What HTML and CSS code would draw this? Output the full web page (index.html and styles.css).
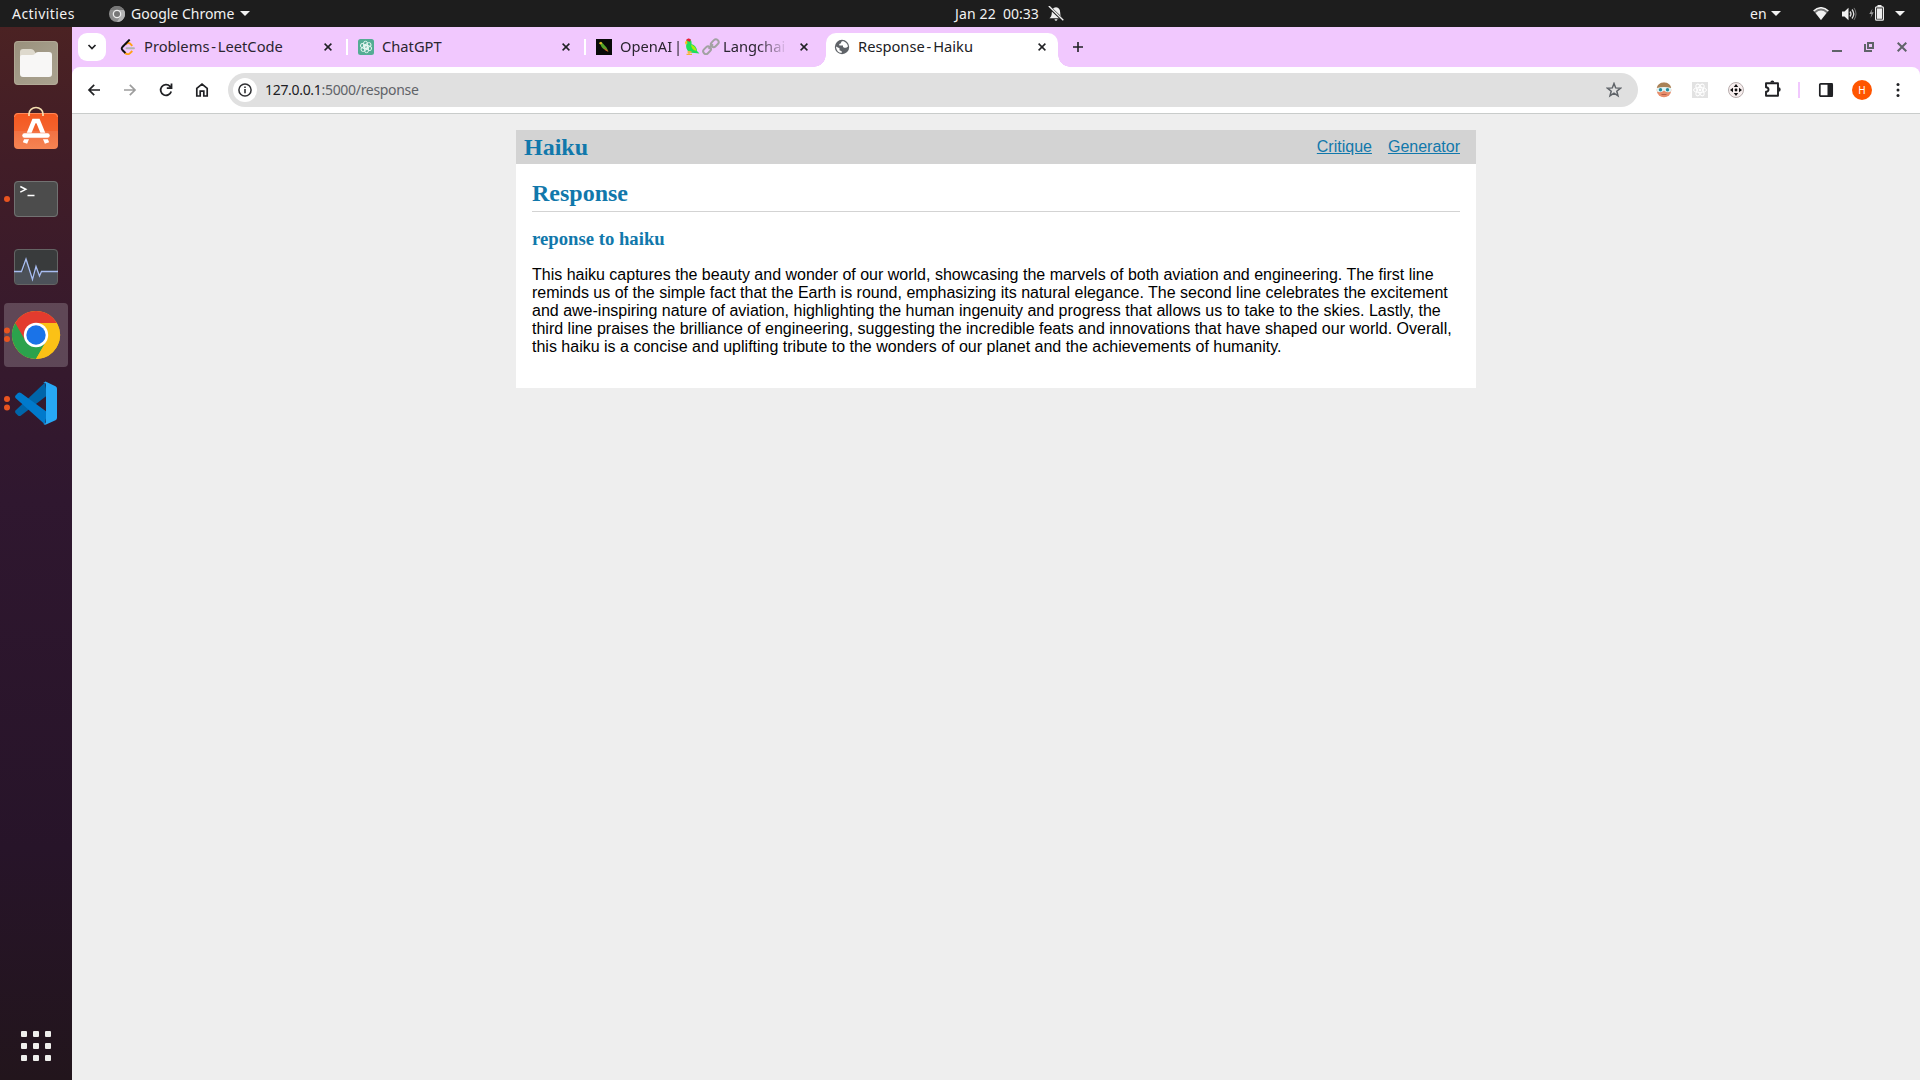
FILE: index.html
```
<!DOCTYPE html>
<html lang="en">
<head>
<meta charset="utf-8">
<title>Response - Haiku</title>
<link rel="stylesheet" href="styles.css">
</head>
<body>
<header class="topbar">
  <span class="activities">Activities</span>
  <div class="app-menu">
    <svg width="16" height="16" viewBox="0 0 16 16"><circle cx="8" cy="8" r="8" fill="#8d8d8d"/><path d="M8 4h7A8 8 0 0 1 8 16l3.500-6z" fill="#b4b4b4"/><path d="M1.200 4A8 8 0 0 1 15 4H8z" fill="#777"/><circle cx="8" cy="8" r="4.300" fill="#eee"/><circle cx="8" cy="8" r="3" fill="#777"/></svg>
    <span class="app-name">Google Chrome</span>
    <i class="caret"></i>
  </div>
  <div class="clock">
    <span class="date">Jan 22</span><span class="time">00:33</span>
    <svg width="16" height="16" viewBox="0 0 16 16"><path d="M8 1.300c3 .2 4.200 2.400 4.200 5.200 0 3 .8 4.200 2.300 5.800h-13C3 10.700 3.800 9.500 3.800 6.500 3.800 3.700 5 1.500 8 1.300zM6.500 13.200h3q-.3 1.500-1.500 1.500t-1.500-1.500z" fill="#eee"/><path d="M.5.5l15 14" stroke="#1d1d1d" stroke-width="3"/><path d="M.8 0l14.500 14.200" stroke="#eee" stroke-width="1.400"/></svg>
  </div>
  <div class="status">
    <span class="lang">en</span><i class="caret"></i>
    <svg class="wifi" width="16" height="14" viewBox="0 0 16 14"><path d="M.6 4Q8-2.500 15.400 4L8 13z" fill="#777"/><path d="M.6 4Q8-2.500 15.400 4" fill="none" stroke="#f2f2f2" stroke-width="1.500"/><path d="M2.600 6Q8 1.200 13.400 6L8 13z" fill="#f2f2f2"/></svg>
    <svg class="volume" width="16" height="14" viewBox="0 0 16 14"><path d="M1 4.500h2.500L7.500.700v12.600L3.500 9.500H1z" fill="#f2f2f2"/><path d="M9 4.500q2 2.500 0 5M11 2.500q3.500 4.500 0 9" fill="none" stroke="#ddd" stroke-width="1.300"/><path d="M13 .9q4 6 0 12" fill="none" stroke="#777"/></svg>
    <svg class="battery" width="16" height="16" viewBox="0 0 16 16"><path d="M3.500 3.500L.3 9h2.200l-1 4L4.700 7.300H2.500z" fill="#999"/><path d="M8.500 0h4v2h-4z" fill="#eee"/><rect x="6.600" y="1.800" width="7.800" height="13.400" rx="1" fill="none" stroke="#eee" stroke-width="1.200"/><path d="M8 3.400h5v10.400H8z" fill="#eee"/></svg>
    <i class="caret"></i>
  </div>
</header>

<div class="desktop">
  <nav class="dock">
    <svg viewBox="0 0 64 64"><defs><linearGradient id="g1" x2="1" y2="1"><stop stop-color="#99907c"/><stop offset=".5" stop-color="#a39b88"/><stop offset="1" stop-color="#aaa28f"/></linearGradient></defs><rect x="10" y="10" width="44" height="44" rx="4" fill="url(#g1)"/><rect x="10.500" y="10.500" width="43" height="43" rx="3.500" fill="none" stroke="#bbb39f" stroke-opacity=".6"/><path d="M16 21q0-3 3-3h8q2 0 3 1.500l1.500 2.500-3 5H16z" fill="#ded9cd"/><path d="M16 26q0-2 2-2h10q2 0 3-1.500 1-1.500 3-1.500h11q3 0 3 3v19q0 3-3 3H19q-3 0-3-3z" fill="#f8f7f6"/></svg>
    <svg viewBox="0 0 64 64"><defs><linearGradient id="g2" x2="0" y2="1"><stop stop-color="#f4571f"/><stop offset=".5" stop-color="#f4632e"/><stop offset=".51" stop-color="#f27243"/><stop offset="1" stop-color="#f58453"/></linearGradient></defs><rect x="10" y="14" width="44" height="36" rx="4" fill="url(#g2)"/><path d="M10.500 18q0-3.500 3.500-3.500h36q3.500 0 3.500 3.500" fill="none" stroke="#ff8757"/><path d="M25 17v-2a7 6.500 0 0 1 14 0v2" fill="none" stroke="#f5dfb0" stroke-width="1.700"/><path d="M21 44L30 22h4L43 44" fill="none" stroke="#fff" stroke-width="4.600"/><path d="M29.500 20h5l1 4h-7z" fill="#fff"/><path d="M20 37h24" stroke="#f4774a" stroke-width="6.500"/><path d="M20.500 36.500h23" stroke="#fff" stroke-width="4.500" stroke-linecap="round"/></svg>
    <svg viewBox="0 0 64 64"><circle cx="3" cy="32" r="3" fill="#e95420"/><rect x="10" y="14" width="44" height="36" rx="4" fill="#4c4c4c"/><rect x="10.500" y="14.500" width="43" height="35" rx="3.500" fill="none" stroke="#727272"/><path d="M16.300 19.500l5.500 2.800-5.500 2.800M23.500 28.500h7" fill="none" stroke="#fff" stroke-width="1.500"/></svg>
    <svg viewBox="0 0 64 64"><rect x="10" y="14" width="44" height="36" rx="4" fill="#393b3c"/><path d="M11 37h8l4-13 6 21 4-12 3 8 2-4h15v9q0 3-3 3H14q-3 0-3-3z" fill="#4c5159"/><rect x="10.500" y="14.500" width="43" height="35" rx="3.500" fill="none" stroke="#646464"/><path d="M10 36.500h7.500L22 24l6.500 20.500L32 31.500l3.500 9.500 2-4.500H54" fill="none" stroke="#a8bdf2" stroke-width="1.300"/></svg>
    <svg class="running" viewBox="0 0 64 64"><circle cx="3" cy="27.500" r="3" fill="#e95420"/><circle cx="3" cy="36" r="3" fill="#e95420"/><circle cx="32" cy="32" r="24" fill="#fbc116"/><path d="M32 32L11.200 20A24 24 0 0 0 32 56l10.400-18z" fill="#2ba24c"/><path d="M11.200 20A24 24 0 0 1 52.800 20H32L21.600 38z" fill="#e33b2e"/><path d="M32 20h20.800A24 24 0 0 1 32 56l10.400-18z" fill="#fbc116"/><circle cx="32" cy="32" r="12.200" fill="#fff"/><circle cx="32" cy="32" r="9.700" fill="#1a73e8"/></svg>
    <svg viewBox="0 0 64 64"><circle cx="3" cy="28" r="3" fill="#e95420"/><circle cx="3" cy="36.500" r="3" fill="#e95420"/><path d="M11.500 39.500L41 11.500l2 13L17 44.500q-1.500 1-3 0l-2.500-2.500q-1-1.300 0-2.500z" fill="#0065a9"/><path d="M11.500 24.500L14 22q1.500-1.200 3 0l26 19-2 12.500L11.500 27q-1-1.200 0-2.500z" fill="#007acc"/><path d="M39 52.500q3 1 3-2V14q0-3-3-2l2.500-1.500 10 4.700q1.500.8 1.500 2.500v29q0 1.700-1.500 2.500L42 53.500q-2 .5-3-1z" fill="#27a8f5"/></svg>
    <span class="dock-space"></span>
    <svg class="apps" viewBox="0 0 64 64" fill="#efefec"><rect x="17" y="17" width="6" height="6" rx="1"/><rect x="29" y="17" width="6" height="6" rx="1"/><rect x="41" y="17" width="6" height="6" rx="1"/><rect x="17" y="29" width="6" height="6" rx="1"/><rect x="29" y="29" width="6" height="6" rx="1"/><rect x="41" y="29" width="6" height="6" rx="1"/><rect x="17" y="41" width="6" height="6" rx="1"/><rect x="29" y="41" width="6" height="6" rx="1"/><rect x="41" y="41" width="6" height="6" rx="1"/></svg>
  </nav>

  <div class="browser">
    <div class="tabstrip">
      <div class="tab-search"><svg width="10" height="10" viewBox="0 0 10 10"><path d="M1.500 3L5 6.500 8.500 3" fill="none" stroke="#202124" stroke-width="1.700"/></svg></div>
      <div class="tab">
        <svg width="16" height="16" viewBox="0 0 16 16"><path d="M5.500 5.500q2.500-2.500 4.500-1L12.300 6.800M4.800 13.500q2.700 3 5 .9l2.500-2.400" fill="none" stroke="#ffa116" stroke-width="1.900"/><path d="M9.700.5L2.400 8q-1.300 1.500 0 3l3 3" fill="none" stroke="#111" stroke-width="1.900"/><path d="M6.500 9.300h7.500" stroke="#b3b3b3" stroke-width="1.900" stroke-linecap="round"/></svg>
        <span class="title">Problems - LeetCode</span>
        <svg class="close" width="8" height="8" viewBox="0 0 8 8"><path d="M.6.6l6.800 6.800M7.400.6L.6 7.400" stroke="#202124" stroke-width="1.500"/></svg>
      </div>
      <i class="divider"></i>
      <div class="tab">
        <svg width="16" height="16" viewBox="0 0 16 16"><rect width="16" height="16" rx="2.500" fill="#54ac94"/><g fill="none" stroke="#e6f7f1" stroke-width=".9"><rect id="lobe" x="5.500" y="2.300" width="4" height="7.200" rx="2"/><use href="#lobe" transform="rotate(60 8 8)"/><use href="#lobe" transform="rotate(120 8 8)"/><use href="#lobe" transform="rotate(180 8 8)"/><use href="#lobe" transform="rotate(240 8 8)"/><use href="#lobe" transform="rotate(300 8 8)"/></g></svg>
        <span class="title">ChatGPT</span>
        <svg class="close" width="8" height="8" viewBox="0 0 8 8"><path d="M.6.6l6.800 6.800M7.400.6L.6 7.400" stroke="#202124" stroke-width="1.500"/></svg>
      </div>
      <i class="divider"></i>
      <div class="tab">
        <svg width="16" height="16" viewBox="0 0 16 16"><path d="M0 0h16v16H0z" fill="#080a08"/><path d="M3.500 3.500Q5 2 6.500 4l4 4.500 2 4-3-1.500Q5 9 4.500 5z" fill="#54a528"/><path d="M3 4.500Q3.500 2.500 5.500 3L6 5l-1.500.5z" fill="#e4b525"/><path d="M7.500 8.500l3 2 2 2.500-3-1.500z" fill="#d9542c"/></svg>
        <span class="title fade"><span class="t-open">OpenAI |</span>
          <svg class="parrot" width="16" height="17" viewBox="0 0 16 17"><path d="M2 2.500Q4-.5 6.500 1.500 8 4 7.500 6q5 1.500 5.500 7l2.500 2.500-5-.5Q4 15 2.500 10.500 1.500 7 3 5z" fill="#1ddf59"/><path d="M2 2.300Q3.500-.7 6.700 1.200L6 4 4 3z" fill="#ed1c32"/><path d="M1 4.500q.5-2 2-2l.5 3-2 1z" fill="#f9ba20"/><path d="M7 6.500q5 2 5.500 6.500-5-1-5.500-6.500z" fill="#b4e80b"/><path d="M3.500 14h4M5 13v3.500M2.500 16.500H8" stroke="#f2b338" stroke-width="1.300"/></svg>
          <svg class="chain" width="18" height="17" viewBox="0 0 18 17" fill="none" stroke="#a2a2a2" stroke-width="2"><rect x="8.500" y="2.500" width="8.500" height="5.500" rx="2.700" transform="rotate(-45 12.700 5.200)"/><rect x=".8" y="9.500" width="8.500" height="5.500" rx="2.700" transform="rotate(-45 5 12.200)"/><path d="M6.500 10.700l4.500-4.500"/></svg>
          <span>Langchain</span></span>
        <svg class="close" width="8" height="8" viewBox="0 0 8 8"><path d="M.6.6l6.800 6.800M7.400.6L.6 7.400" stroke="#202124" stroke-width="1.500"/></svg>
      </div>
      <div class="tab active">
        <svg width="16" height="16" viewBox="0 0 16 16"><circle cx="8" cy="8" r="7.200" fill="#5f6368"/><path d="M9 2q-2.500.5-2 2.200L5.300 5v1.500H9V8l1.200.8h2L14 7.500Q13.500 3.500 9 2zM1.900 7.500L5.500 9.300v2l2.200 1v1.800Q2.500 13.500 1.900 7.500z" fill="#fff"/></svg>
        <span class="title">Response - Haiku</span>
        <svg class="close" width="8" height="8" viewBox="0 0 8 8"><path d="M.6.6l6.800 6.800M7.400.6L.6 7.400" stroke="#202124" stroke-width="1.500"/></svg>
      </div>
      <svg class="newtab" width="10" height="10" viewBox="0 0 10 10"><path d="M5 0v10M0 5h10" stroke="#202124" stroke-width="1.600"/></svg>
      <div class="window-buttons">
        <svg width="10" height="10" viewBox="0 0 10 10"><path d="M0 8h10v2H0z" fill="#5f6368"/></svg>
        <svg width="10" height="10" viewBox="0 0 10 10" fill="none" stroke="#5f6368" stroke-width="2"><path d="M4 1h5v5H4zM1 2v7h7"/></svg>
        <svg width="10" height="10" viewBox="0 0 10 10"><path d="M.7.7l8.600 8.600M9.300.7L.7 9.300" stroke="#5f6368" stroke-width="2"/></svg>
      </div>
    </div>

    <div class="toolbar-back">
    <div class="toolbar">
      <svg class="tool" viewBox="0 0 16 16" fill="none" stroke="#202124" stroke-width="1.700"><path d="M14 8H3.500M8.200 2.800L3 8l5.200 5.200"/></svg>
      <svg class="tool" viewBox="0 0 16 16" fill="none" stroke="#9d9d9d" stroke-width="1.700"><path d="M2 8h10.500M7.800 2.800L13 8l-5.200 5.200"/></svg>
      <svg class="tool" viewBox="0 0 16 16" fill="none" stroke="#202124" stroke-width="1.800"><path d="M13.200 9.500A5.400 5.400 0 1 1 12 4.300l1.500 1.500M13.500 1.500v4.700H8.800"/></svg>
      <svg class="tool" viewBox="0 0 16 16" fill="none" stroke="#202124" stroke-width="1.700"><path d="M2.800 14V6.300L8 2.200l5.200 4.100V14h-3.400V9.200H6.200V14z"/></svg>
      <div class="omnibox">
        <span class="site-info"><svg width="14" height="14" viewBox="0 0 14 14"><circle cx="7" cy="7" r="6.100" fill="none" stroke="#303134" stroke-width="1.500"/><path d="M7 6v4.300M7 3.400v1.500" stroke="#303134" stroke-width="1.600"/></svg></span>
        <span class="url"><b>127.0.0.1</b>:5000/response</span>
        <svg class="star" width="16" height="16" viewBox="0 0 16 16"><path d="M8 1.500l1.700 4.400 4.800.3-3.700 3 1.200 4.600L8 11.200l-4 2.600 1.200-4.600-3.700-3 4.800-.3z" fill="none" stroke="#5f6368" stroke-width="1.500"/></svg>
      </div>
      <svg class="tool" viewBox="0 0 16 16"><circle cx="8" cy="8" r="7.300" fill="#e88d6b"/><path d="M.8 6Q2 .5 8 .5T15.200 6L8 5z" fill="#a98257"/><path d="M1 6q7-2 14 0v3.500q-4 2-7-1-3 3-7 1z" fill="#dff5f6"/><circle cx="4.500" cy="7.700" r="1.700" fill="#278c9c"/><circle cx="11.500" cy="7.700" r="1.700" fill="#278c9c"/><path d="M5.500 12.500h5" stroke="#b35d48"/></svg>
      <svg class="tool" viewBox="0 0 16 16"><path d="M0 0h16v16H0z" fill="#e2e2e2"/><g fill="none" stroke="#fff"><ellipse cx="8" cy="8" rx="6.500" ry="2.600"/><ellipse cx="8" cy="8" rx="6.500" ry="2.600" transform="rotate(60 8 8)"/><ellipse cx="8" cy="8" rx="6.500" ry="2.600" transform="rotate(120 8 8)"/></g><circle cx="8" cy="8" r="1.400" fill="#fff"/></svg>
      <svg class="tool" viewBox="0 0 16 16"><circle cx="8" cy="8" r="7.500" fill="#f7eeee" stroke="#b8adad"/><path d="M8 2l2.200 3H5.800zM8 14l2.200-3H5.800zM2 8l3-2.200v4.400zM14 8l-3-2.200v4.400z" fill="#111"/><circle cx="8" cy="8" r="1.400" fill="#111"/></svg>
      <svg class="tool puzzle" viewBox="0 0 18 18"><path d="M3 3.200h12v12.600H3v-4q2.500-.3 2.500-2.300T3 7.200z" fill="none" stroke="#202124" stroke-width="1.900" stroke-linejoin="round"/><path d="M7.300 2.500a2 2 0 0 1 4 0zM15.500 7.300a2.200 2.200 0 0 1 0 4.400z" fill="#202124"/></svg>
      <i class="tool-divider"></i>
      <svg class="tool" viewBox="0 0 16 16"><rect x="1.800" y="1.800" width="12.400" height="12.400" rx="1" fill="none" stroke="#202124" stroke-width="1.700"/><path d="M9.500 1h5v14h-5z" fill="#202124"/></svg>
      <span class="avatar">H</span>
      <svg class="tool" viewBox="0 0 16 16" fill="#202124"><circle cx="8" cy="2.500" r="1.500"/><circle cx="8" cy="8" r="1.500"/><circle cx="8" cy="13.500" r="1.500"/></svg>
    </div>
    </div>

    <div class="viewport">
      <main class="page">
        <div class="page-nav">
          <h1>Haiku</h1>
          <ul><li><a href="#">Critique</a></li><li><a href="#">Generator</a></li></ul>
        </div>
        <section class="content">
          <h1>Response</h1>
          <h3>reponse to haiku</h3>
          <p>This haiku captures the beauty and wonder of our world, showcasing the marvels of both aviation and engineering. The first line reminds us of the simple fact that the Earth is round, emphasizing its natural elegance. The second line celebrates the excitement and awe-inspiring nature of aviation, highlighting the human ingenuity and progress that allows us to take to the skies. Lastly, the third line praises the brilliance of engineering, suggesting the incredible feats and innovations that have shaped our world. Overall, this haiku is a concise and uplifting tribute to the wonders of our planet and the achievements of humanity.</p>
        </section>
      </main>
    </div>
  </div>
</div>
</body>
</html>
```
FILE: styles.css
```
* { box-sizing: border-box; }
body {
  margin: 0;
  width: 1920px;
  height: 1080px;
  display: flex;
  flex-direction: column;
  overflow: hidden;
  font-family: "Noto Sans", sans-serif;
  font-size: 14px;
}
svg { display: block; flex: none; }

/* system bar */
.topbar {
  height: 27px;
  flex: none;
  display: flex;
  align-items: center;
  background: #1d1d1d;
  color: #f2f2f2;
  white-space: nowrap;
}
.activities { width: 97px; padding-left: 12px; letter-spacing: 0.450px; }
.app-menu { display: flex; align-items: center; width: 858px; padding-left: 12px; }
.app-name { width: 109px; margin-left: 6px; }
.caret {
  flex: none;
  width: 10px;
  height: 5px;
  background: #f2f2f2;
  clip-path: polygon(0 0, 100% 0, 50% 100%);
}
.clock { display: flex; align-items: center; }
.date { width: 48px; letter-spacing: 0.150px; }
.time { width: 45px; }
.status { display: flex; align-items: center; margin-left: auto; padding-right: 15px; }
.lang { width: 21px; }
.wifi { margin-left: 32px; }
.volume { margin-left: 12px; }
.battery { margin: 0 10px 2px 12px; }

/* dock */
.desktop { flex: 1; display: flex; min-height: 0; }
.dock {
  width: 72px;
  flex: none;
  display: flex;
  flex-direction: column;
  gap: 4px;
  padding: 4px 4px 2px;
  background: linear-gradient(#4b2223, #411d27 13%, #381a2c 27%, #2f172f 45%, #271429 78%, #22151c);
}
.dock svg { width: 64px; height: 64px; }
.running { background: rgba(255, 255, 255, .2); border-radius: 4px; }
.dock-space { flex: 1; }

/* browser chrome */
.browser { flex: 1; display: flex; flex-direction: column; min-width: 0; }
.tabstrip {
  height: 40px;
  flex: none;
  display: flex;
  align-items: center;
  padding: 0 13px 0 6px;
  background: #f1c8fe;
  color: #2b2530;
}
.tab-search {
  width: 28px;
  height: 28px;
  margin-right: 6px;
  display: flex;
  align-items: center;
  justify-content: center;
  background: #fff;
  border-radius: 9px;
}
.tab {
  width: 232px;
  height: 34px;
  margin-top: 6px;
  padding: 0 12px 6px 8px;
  display: flex;
  align-items: center;
}
.title {
  flex: 1;
  min-width: 0;
  display: flex;
  align-items: center;
  margin: 0 16px 0 8px;
  padding-bottom: 2px;
  font-size: 14.700px;
  line-height: 20px;
  word-spacing: -2px;
  white-space: nowrap;
}
.fade {
  overflow: hidden;
  -webkit-mask-image: linear-gradient(90deg, #000 138px, transparent 168px);
  mask-image: linear-gradient(90deg, #000 138px, transparent 168px);
}
.fade > span, .fade > svg { flex: none; }
.close { margin-left: auto; }
.t-open { width: 64px; }
.parrot { margin-right: 2px; }
.chain { margin-right: 3px; }
.divider { width: 2px; height: 16px; margin: 0 2px; background: #fff; }
.active {
  position: relative;
  margin-left: 6px;
  background: #fff;
  border-radius: 10px 10px 0 0;
  color: #202124;
}
.active::before, .active::after {
  content: "";
  position: absolute;
  bottom: 0;
  width: 12px;
  height: 12px;
}
.active::before { left: -12px; background: radial-gradient(circle at 0 0, transparent 11.5px, #fff 12px); }
.active::after { right: -12px; background: radial-gradient(circle at 100% 0, transparent 11.5px, #fff 12px); }
.newtab { margin-left: 15px; }
.window-buttons { display: flex; gap: 22px; margin-left: auto; }
.window-buttons svg:last-child { margin-left: 1px; }

.toolbar-back { background: #f1c8fe; flex: none; }
.toolbar {
  height: 47px;
  display: flex;
  align-items: center;
  gap: 20px;
  padding: 0 14px;
  background: #fff;
  border-bottom: 1px solid #c9cccb;
  border-radius: 8px 8px 0 0;
}
.tool { width: 16px; height: 16px; }
.puzzle { width: 18px; height: 18px; margin: 0 -1px 2px; }
.omnibox {
  flex: 1;
  height: 34px;
  margin: 0 -2px;
  padding: 0 16px 0 5px;
  display: flex;
  align-items: center;
  background: #e0e0e0;
  border-radius: 17px;
}
.site-info {
  width: 24px;
  height: 24px;
  display: flex;
  align-items: center;
  justify-content: center;
  background: #fff;
  border-radius: 50%;
}
.url { margin-left: 8px; padding-bottom: 2px; letter-spacing: -0.310px; color: #5f6368; }
.url b { font-weight: 400; color: #202124; }
.star { margin-left: auto; }
.tool-divider { width: 2px; height: 16px; margin: 0 -2px; background: #f1c8fe; }
.avatar {
  width: 20px;
  height: 20px;
  margin: 0 -2px;
  border-radius: 50%;
  background: #ff5500;
  color: #fff;
  font-size: 10px;
  line-height: 20px;
  text-align: center;
}

/* web page */
.viewport { flex: 1; padding-top: 16px; background: #eee; }
.page {
  width: 960px;
  margin: 0 auto;
  background: #fff;
  color: #000;
  font-family: "Liberation Sans", Arial, sans-serif;
  font-size: 16px;
  line-height: 18px;
}
.page h1, .page h3 { font-family: "Liberation Serif", serif; color: #1178ab; }
.page-nav {
  height: 34px;
  display: flex;
  align-items: center;
  justify-content: space-between;
  padding: 0 16px 0 8px;
  background: lightgray;
}
.page-nav h1 { margin: 0; font-size: 24px; line-height: 28px; }
.page-nav ul { display: flex; gap: 16px; margin: 0; padding: 0; list-style: none; }
.page-nav a { color: #1178ab; }
.content { height: 224px; padding: 15px 16px 0; }
.content h1 { margin: 0; height: 33px; font-size: 24px; line-height: 28px; border-bottom: 1px solid lightgray; }
.content h3 { margin: 16px 0 17px; font-size: 18.720px; line-height: 21px; }
.content p { margin: 0; }
```
